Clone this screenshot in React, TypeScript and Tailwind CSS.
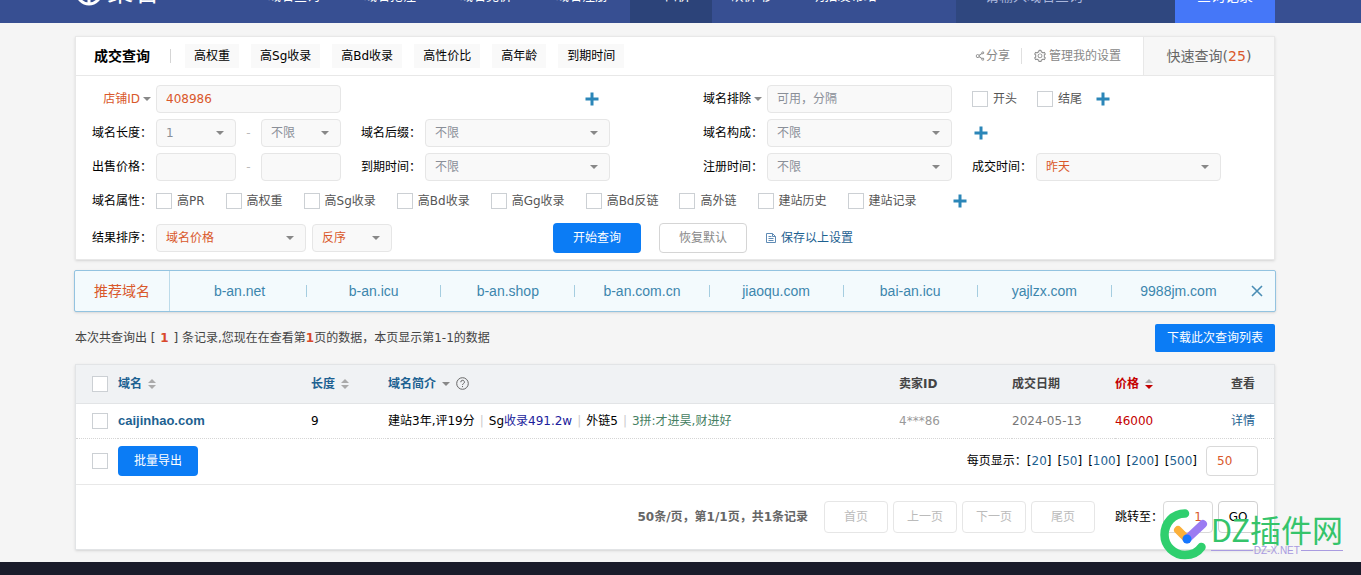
import React, { useState } from "react";
import clsx from "clsx";
import { AiOutlineSetting, AiOutlineShareAlt } from "react-icons/ai";

const navItems = [
  { label: "域名查询", className: "w-24" },
  { label: "域名抢注", className: "w-24" },
  { label: "域名竞价", className: "w-24" },
  { label: "域名注册", className: "w-24" },
  { label: "一口价", className: "w-[82px] bg-[#2c4379]" },
  { label: "砍价 秒", className: "w-20" },
  { label: "明拍发布站", className: "w-[104px]" },
];

const quickTabs = ["高权重", "高Sg收录", "高Bd收录", "高性价比", "高年龄", "到期时间"];

const attributes = [
  "高PR",
  "高权重",
  "高Sg收录",
  "高Bd收录",
  "高Gg收录",
  "高Bd反链",
  "高外链",
  "建站历史",
  "建站记录",
];

const recommended = [
  "b-an.net",
  "b-an.icu",
  "b-an.shop",
  "b-an.com.cn",
  "jiaoqu.com",
  "bai-an.icu",
  "yajlzx.com",
  "9988jm.com",
];

const rows = [
  {
    domain: "caijinhao.com",
    length: 9,
    seller: "4***86",
    date: "2024-05-13",
    price: 46000,
  },
];

const pageSizes = [20, 50, 100, 200, 500];
const pagers = ["首页", "上一页", "下一页", "尾页"];

const Caret = ({ className }: { className?: string }) => (
  <svg viewBox="0 0 8 4" className={clsx("h-1 w-2 shrink-0 fill-[#888]", className)} aria-hidden="true">
    <path d="M0 0h8L4 4z" />
  </svg>
);

const SortArrows = ({ active }: { active?: boolean }) => (
  <svg viewBox="0 0 8 10" className="h-[10px] w-2 shrink-0" aria-hidden="true">
    <path d="M0 4h8L4 0z" fill="#aaa" />
    <path d="M0 6h8L4 10z" fill={active ? "#c40000" : "#aaa"} />
  </svg>
);

const PlusButton = ({ label }: { label: string }) => (
  <button type="button" aria-label={label} className="shrink-0 cursor-pointer">
    <svg viewBox="0 0 14 14" className="size-[14px] fill-[#2b86b8]">
      <path d="M5.5 .5h3v5h5v3h-5v5h-3v-5h-5v-3h5z" />
    </svg>
  </button>
);

const SaveIcon = () => (
  <svg viewBox="0 0 12 12" className="size-3" fill="none" stroke="#5f8bb5" aria-hidden="true">
    <path d="M1.5 1.5h6l3 3v6h-9z" />
    <path d="M3.5 4.5h3M3.5 6.5h5M3.5 8.5h5M7.5 1.5v3h3" />
  </svg>
);

const HelpIcon = () => (
  <svg viewBox="0 0 13 13" className="size-[13px]" fill="none" stroke="#666" aria-hidden="true">
    <circle cx="6.5" cy="6.5" r="5.8" />
    <path d="M4.8 5.2a1.8 1.8 0 1 1 2.6 1.5q-.9.4-.9 1.3M6.5 9v1.1" />
  </svg>
);

const boxStyle = "h-7 rounded-sm border border-[#e6e6e6] bg-[#f9f9f9] text-xs";

interface SelectProps {
  id?: string;
  label?: string;
  value: string;
  className: string;
  active?: boolean;
}

const Select = ({ id, label, value, className, active }: SelectProps) => (
  <div className={clsx("relative shrink-0", className)}>
    <select
      id={id}
      aria-label={label}
      className={clsx(boxStyle, "block w-full appearance-none pl-[9px] outline-none", active ? "text-[#d9582b]" : "text-[#8a8f98]")}
    >
      <option>{value}</option>
    </select>
    <Caret className="pointer-events-none absolute top-3 right-3" />
  </div>
);

const FieldLabel = ({ htmlFor, children }: { htmlFor?: string; children: React.ReactNode }) => (
  <label htmlFor={htmlFor} className="w-16 shrink-0">
    {children}
  </label>
);

const Check = ({ label, hidden }: { label: string; hidden?: boolean }) => (
  <label className="flex shrink-0 items-center gap-[5px] text-[#555]">
    <input
      type="checkbox"
      aria-label={hidden ? label : undefined}
      className="size-4 appearance-none border border-[#ccd0d4] bg-white checked:bg-[#0b7cf5]"
    />
    {!hidden && label}
  </label>
);

const TopNav = () => (
  <header className="flex h-[23px] items-end overflow-hidden bg-[#374f92] pr-[86px] pl-[75px] text-sm text-white">
    <div className="flex h-[54px] flex-1 items-center">
      <a href="#" className="flex w-[171px] shrink-0 items-center gap-1 pb-2 text-[26px] leading-8">
        <svg viewBox="0 0 28 28" className="size-7" fill="none" stroke="white" strokeWidth="3" aria-hidden="true">
          <circle cx="14" cy="14" r="12" />
          <path d="M10 6v13l-4 2M18 6v13l4 2M14 14v12" />
        </svg>
        聚名
      </a>
      <nav className="flex flex-1">
        {navItems.map((item) => (
          <a key={item.label} href="#" className={clsx("flex h-[54px] shrink-0 items-center justify-center text-[13px]", item.className)}>
            {item.label}
          </a>
        ))}
      </nav>
      <input
        aria-label="搜索域名"
        placeholder="请输入域名查询"
        className="h-[54px] w-[219px] shrink-0 bg-[#2f477f] px-[29px] placeholder:text-[#a9b6dc]"
      />
      <button type="button" className="h-[54px] w-[100px] shrink-0 bg-[#4577f8]">
        查询记录
      </button>
    </div>
  </header>
);

const SearchPanel = () => (
  <section className="border border-[#e8e8e8] bg-white shadow-sm">
    <div className="flex h-[39px] items-center border-b border-[#e8e8e8] pl-[18px]">
      <h2 className="w-[76px] text-sm font-bold">成交查询</h2>
      <span className="mr-[14px] h-[14px] w-px bg-[#d5d5d5]" />
      <div className="flex flex-1 gap-3">
        {quickTabs.map((tab) => (
          <button key={tab} type="button" className="h-6 cursor-pointer bg-[#f9f9f9] px-[9px]">
            {tab}
          </button>
        ))}
      </div>
      <div className="flex items-center text-[#888]">
        <a href="#" className="flex items-center border-r border-[#e0e0e0] pr-[11px]">
          <AiOutlineShareAlt size={12} />
          分享
        </a>
        <a href="#" className="flex items-center gap-[2px] pr-[22px] pl-[11px]">
          <AiOutlineSetting size={14} />
          管理我的设置
        </a>
      </div>
      <a href="#" className="flex h-full w-[131px] items-center justify-center border-l border-[#e8e8e8] bg-[#f7f7f7] text-sm text-[#666]">
        快速查询(<span className="text-[#d9582b]">25</span>)
      </a>
    </div>

    <form className="flex flex-col gap-[6px] px-4 pt-[9px] pb-[6px]" onSubmit={(e) => e.preventDefault()}>
      <div className="flex gap-5">
        <div className="flex w-[249px] items-center">
          <label htmlFor="shop" className="flex w-16 items-center justify-end gap-[3px] pr-[5px] text-[#d9582b]">
            店铺ID <Caret />
          </label>
          <input id="shop" defaultValue="408986" className={clsx(boxStyle, "w-[185px] px-[9px] text-[#d9582b]")} />
        </div>
        <div className="mr-[73px] flex w-[249px] items-center justify-end pr-[11px]">
          <PlusButton label="添加店铺" />
        </div>
        <div className="flex w-[249px] items-center">
          <label htmlFor="exclude" className="flex w-16 items-center gap-[3px]">
            域名排除 <Caret />
          </label>
          <input
            id="exclude"
            placeholder="可用，分隔"
            className={clsx(boxStyle, "w-[185px] px-[9px] placeholder:text-[#8a8f98]")}
          />
        </div>
        <div className="flex items-center">
          <div className="flex gap-5">
            <Check label="开头" />
            <Check label="结尾" />
          </div>
          <span className="ml-[14px] flex">
            <PlusButton label="添加排除" />
          </span>
        </div>
      </div>

      <div className="flex gap-5">
        <div className="flex w-[249px] items-center">
          <FieldLabel htmlFor="len">域名长度：</FieldLabel>
          <Select id="len" value="1" className="w-20" />
          <span className="w-[25px] text-center text-[#bbb]">-</span>
          <Select label="最大长度" value="不限" className="w-20" />
        </div>
        <div className="mr-[73px] flex w-[249px] items-center">
          <FieldLabel htmlFor="suffix">域名后缀：</FieldLabel>
          <Select id="suffix" value="不限" className="w-[185px]" />
        </div>
        <div className="flex w-[249px] items-center">
          <FieldLabel htmlFor="compose">域名构成：</FieldLabel>
          <Select id="compose" value="不限" className="w-[185px]" />
        </div>
        <div className="flex items-center pl-[2px]">
          <PlusButton label="添加构成" />
        </div>
      </div>

      <div className="flex gap-5">
        <div className="flex w-[249px] items-center">
          <FieldLabel htmlFor="price">出售价格：</FieldLabel>
          <input id="price" className={clsx(boxStyle, "w-20 px-[9px]")} />
          <span className="w-[25px] text-center text-[#bbb]">-</span>
          <input aria-label="最高价格" className={clsx(boxStyle, "w-20 px-[9px]")} />
        </div>
        <div className="mr-[73px] flex w-[249px] items-center">
          <FieldLabel htmlFor="expire">到期时间：</FieldLabel>
          <Select id="expire" value="不限" className="w-[185px]" />
        </div>
        <div className="flex w-[249px] items-center">
          <FieldLabel htmlFor="register">注册时间：</FieldLabel>
          <Select id="register" value="不限" className="w-[185px]" />
        </div>
        <div className="flex w-[249px] items-center">
          <FieldLabel htmlFor="deal">成交时间：</FieldLabel>
          <Select id="deal" value="昨天" active className="w-[185px]" />
        </div>
      </div>

      <div className="flex h-7 items-center">
        <span className="w-16 shrink-0">域名属性：</span>
        <div className="flex gap-[21px]">
          {attributes.map((name) => (
            <Check key={name} label={name} />
          ))}
        </div>
        <span className="ml-9 flex">
          <PlusButton label="添加属性" />
        </span>
      </div>

      <div className="flex h-8 items-center pt-[2px]">
        <FieldLabel htmlFor="sort">结果排序：</FieldLabel>
        <Select id="sort" value="域名价格" active className="mr-[6px] w-[150px]" />
        <Select label="排序方向" value="反序" active className="w-20" />
        <button type="submit" className="ml-[161px] h-[30px] w-[88px] cursor-pointer rounded-sm bg-[#0b7cf5] text-white">
          开始查询
        </button>
        <button type="reset" className="ml-[18px] h-[30px] w-[88px] cursor-pointer rounded-sm border border-[#d5d5d5] bg-white text-[#888]">
          恢复默认
        </button>
        <a href="#" className="ml-[18px] flex items-center gap-1 text-[#1d6191]">
          <SaveIcon />
          保存以上设置
        </a>
      </div>
    </form>
  </section>
);

const RecommendBar = ({ onClose }: { onClose: () => void }) => (
  <section className="-mx-px mt-[10px] flex h-[42px] items-center rounded-xs border border-[#93c3e0] bg-[#f3fafd] text-sm shadow-sm">
    <h3 className="mr-[3px] flex h-full w-[95px] shrink-0 items-center justify-center border-r border-[#bcdbea] text-[#d9582b]">推荐域名</h3>
    <ul className="flex flex-1 divide-x divide-[#a5cde0] font-['Liberation_Sans',sans-serif] leading-3">
      {recommended.map((name) => (
        <li key={name} className="flex-1 text-center">
          <a href="#" className="text-[#3c86ad]">
            {name}
          </a>
        </li>
      ))}
    </ul>
    <button type="button" aria-label="关闭" onClick={onClose} className="mr-[7px] flex w-[23px] cursor-pointer justify-center">
      <svg viewBox="0 0 12 12" className="size-3" stroke="#4a8db5" strokeWidth="1.6" aria-hidden="true">
        <path d="M1 1l10 10M11 1L1 11" />
      </svg>
    </button>
  </section>
);

const Bar = () => <span className="mx-[5px] text-[#ccc]">|</span>;

const ResultTable = () => (
  <section className="mt-3 border border-[#e2e4e6] bg-white shadow-sm">
    <table className="w-full table-fixed text-left">
      <thead className="bg-[#f0f2f4]">
        <tr className="h-[38px] border-b border-[#e2e4e6] text-[#444]">
          <th className="w-[42px] pl-4">
            <Check label="全选" hidden />
          </th>
          <th className="w-[193px]">
            <a href="#" className="flex items-center gap-[6px] text-[#1d6191]">
              域名 <SortArrows />
            </a>
          </th>
          <th className="w-[77px]">
            <a href="#" className="flex items-center gap-[6px] text-[#1d6191]">
              长度 <SortArrows />
            </a>
          </th>
          <th>
            <a href="#" className="flex items-center gap-[6px] text-[#1d6191]">
              域名简介 <Caret /> <HelpIcon />
            </a>
          </th>
          <th className="w-[113px]">卖家ID</th>
          <th className="w-[103px]">成交日期</th>
          <th className="w-[116px]">
            <a href="#" className="flex items-center gap-[6px] text-[#c40000]">
              价格 <SortArrows active />
            </a>
          </th>
          <th className="w-[43px]">查看</th>
        </tr>
      </thead>
      <tbody>
        {rows.map((row) => (
          <tr key={row.domain} className="h-[35px] border-b border-dotted border-[#d5d5d5]">
            <td className="pl-4">
              <Check label={row.domain} hidden />
            </td>
            <td>
              <a href="#" className="font-['Liberation_Sans',sans-serif] text-[13px] font-bold text-[#1d6191]">
                {row.domain}
              </a>
            </td>
            <td>{row.length}</td>
            <td>
              建站3年,评19分
              <Bar />
              Sg<span className="text-[#1c1c9c]">收录491.2w</span>
              <Bar />
              外链5
              <Bar />
              <span className="text-[#468062]">3拼:才进昊,财进好</span>
            </td>
            <td className="text-[#999]">{row.seller}</td>
            <td className="text-[#777]">{row.date}</td>
            <td className="text-[#c40000]">{row.price}</td>
            <td>
              <a href="#" className="text-[#1d6191]">
                详情
              </a>
            </td>
          </tr>
        ))}
      </tbody>
    </table>

    <div className="flex h-[46px] items-center border-b border-[#e8e8e8] pr-4 pl-4">
      <Check label="全选本页" hidden />
      <button type="button" className="ml-[10px] h-[30px] w-20 cursor-pointer rounded-sm bg-[#0b7cf5] text-white">
        批量导出
      </button>
      <div className="ml-auto flex items-center">
        <label htmlFor="pageSize">每页显示：</label>
        <div className="flex gap-[6px]">
          {pageSizes.map((size) => (
            <span key={size}>
              [
              <a href="#" className="text-[#1d6191]">
                {size}
              </a>
              ]
            </span>
          ))}
        </div>
        <input id="pageSize" defaultValue="50" className="ml-[9px] h-[30px] w-[52px] rounded-sm border border-[#d9d9d9] pl-[10px] text-[#d9582b]" />
      </div>
    </div>

    <div className="flex h-16 items-center justify-end pr-4">
      <strong className="mr-4 text-[#666]">50条/页，第1/1页，共1条记录</strong>
      <div className="flex gap-[5px]">
        {pagers.map((text) => (
          <button key={text} type="button" disabled className="h-8 w-16 rounded-sm border border-[#e6e6e6] text-[#bbb]">
            {text}
          </button>
        ))}
      </div>
      <label htmlFor="jump" className="ml-5">
        跳转至：
      </label>
      <input id="jump" defaultValue="1" className="h-8 w-[50px] rounded-sm border border-[#d9d9d9] pl-5 text-center text-[#d9582b]" />
      <button type="button" className="ml-[5px] h-8 w-10 cursor-pointer rounded-sm border border-[#d0d0d0]">
        GO
      </button>
    </div>
  </section>
);

const Watermark = () => (
  <div className="pointer-events-none absolute right-[18px] bottom-[15px] flex items-center gap-[3px]">
    <svg viewBox="0 0 48 51" className="h-[51px] w-12" fill="none" strokeLinecap="round" aria-hidden="true">
      <path d="M25 4.5C13 4.5 4.5 14 4.5 26C4.5 37 14 46 25 46C32 46 38 43 41.500 38" stroke="#2fcf6e" strokeWidth="8.5" />
      <path d="M18 21l9 9" stroke="#fbb03b" strokeWidth="8" />
      <path d="M27 30l16-15" stroke="#9b7bf2" strokeWidth="8" />
      <circle cx="27" cy="30" r="4.5" fill="#1677ff" />
    </svg>
    <div className="flex flex-col">
      <span className="font-['Noto_Sans_CJK_SC',sans-serif] text-[31px] leading-8 text-[#35c46b]">DZ插件网</span>
      <span className="flex items-center gap-px font-['Liberation_Sans',sans-serif] text-[10px] leading-3 text-[#a99be0]">
        <span className="h-px flex-1 bg-[#a99be0]" />
        DZ-X.NET
        <span className="h-px flex-1 bg-[#a99be0]" />
      </span>
    </div>
  </div>
);

const App: React.FC = () => {
  const [showRecommend, setShowRecommend] = useState(true);

  return (
    <div className="relative flex min-h-screen flex-col bg-[#f5f5f5] font-['DejaVu_Sans','Noto_Sans_CJK_SC',sans-serif] text-xs leading-4 text-black">
      <TopNav />

      <main className="pt-[13px] pr-[86px] pb-3 pl-[75px]">
        <SearchPanel />
        {showRecommend && <RecommendBar onClose={() => setShowRecommend(false)} />}

        <div className="mt-3 flex items-center justify-between">
          <p className="text-[#444]">
            本次共查询出 [ <b className="mx-px text-[#d9482b]">1</b> ] 条记录,您现在在查看第<b className="text-[#d9482b]">1</b>
            页的数据，本页显示第1-1的数据
          </p>
          <button type="button" className="h-7 w-[120px] cursor-pointer rounded-xs bg-[#0b7cf5] text-white">
            下载此次查询列表
          </button>
        </div>

        <ResultTable />
      </main>

      <footer className="min-h-[13px] flex-1 bg-[#191b2a]" />
      <Watermark />
    </div>
  );
};

export default App;
